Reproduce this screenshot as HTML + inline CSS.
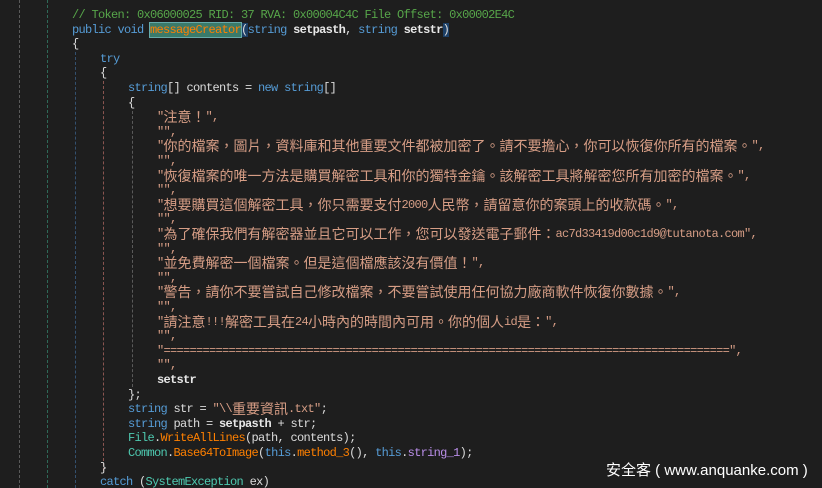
<!DOCTYPE html>
<html><head><meta charset="utf-8"><style>
html,body{margin:0;padding:0;background:#1e1e1e;width:822px;height:488px;overflow:hidden;position:relative}
.g{position:absolute;width:0;border-left:1px dashed}
.code{position:absolute;left:0;top:8px;font-family:"Liberation Mono",monospace;font-size:12px;letter-spacing:-0.7px;color:#dcdcdc}
.l{position:absolute;left:0;height:14.6px;line-height:14.6px;white-space:pre}
.c{font-family:"Noto Sans CJK TC","Noto Sans CJK SC",sans-serif;font-size:14px;letter-spacing:0;line-height:14.6px;display:inline-block;vertical-align:top;height:14.6px}
.kw{color:#569cd6}.cm{color:#57a64a}.st{color:#d69d85}.mt{color:#ff8000}.ty{color:#4ec9b0}.fd{color:#b98ee8}
.b{font-weight:bold;color:#e8e8e8}
.hl{background:#3a7a6a;outline:1px solid #6aa;}
.pb{background:#1c3f66}
.wm{position:absolute;left:606px;top:459px;font-family:"Liberation Sans","Noto Sans CJK SC",sans-serif;font-size:15px;color:#fff;white-space:pre}
</style></head><body>
<div class="g" style="left:19px;top:0;height:488px;border-color:#5a5a5a"></div>
<div class="g" style="left:47px;top:0;height:488px;border-color:#2e6a58"></div>
<div class="g" style="left:75px;top:52px;height:436px;border-color:#34506e"></div>
<div class="g" style="left:103px;top:81px;height:390px;border-color:#8a5550"></div>
<div class="g" style="left:132px;top:111px;height:276px;border-color:#5a5a5a"></div>
<div class="code">
<div class="l" style="top:0;left:72px"><span class="cm">// Token: 0x06000025 RID: 37 RVA: 0x00004C4C File Offset: 0x00002E4C</span></div>
<div class="l" style="top:14.6px;left:72px"><span class="kw">public void </span><span class="mt hl">messageCreator</span><span class="pb">(</span><span class="kw">string</span> <span class="b">setpasth</span>, <span class="kw">string</span> <span class="b">setstr</span><span class="pb">)</span></div>
<div class="l" style="top:29.2px;left:72px">{</div>
<div class="l" style="top:43.8px;left:100px"><span class="kw">try</span></div>
<div class="l" style="top:58.4px;left:100px">{</div>
<div class="l" style="top:73px;left:128px"><span class="kw">string</span>[] contents = <span class="kw">new</span> <span class="kw">string</span>[]</div>
<div class="l" style="top:87.6px;left:128px">{</div>
<div class="l st" style="top:102.2px;left:157px">"<span class="c">注意！</span>",</div>
<div class="l st" style="top:116.8px;left:157px">"",</div>
<div class="l st" style="top:131.4px;left:157px">"<span class="c">你的檔案，圖片，資料庫和其他重要文件都被加密了。請不要擔心，你可以恢復你所有的檔案。</span>",</div>
<div class="l st" style="top:146px;left:157px">"",</div>
<div class="l st" style="top:160.6px;left:157px">"<span class="c">恢復檔案的唯一方法是購買解密工具和你的獨特金鑰。該解密工具將解密您所有加密的檔案。</span>",</div>
<div class="l st" style="top:175.2px;left:157px">"",</div>
<div class="l st" style="top:189.8px;left:157px">"<span class="c">想要購買這個解密工具，你只需要支付</span>2000<span class="c">人民幣，請留意你的案頭上的收款碼。</span>",</div>
<div class="l st" style="top:204.4px;left:157px">"",</div>
<div class="l st" style="top:219px;left:157px">"<span class="c">為了確保我們有解密器並且它可以工作，您可以發送電子郵件：</span>ac7d33419d00c1d9@tutanota.com",</div>
<div class="l st" style="top:233.6px;left:157px">"",</div>
<div class="l st" style="top:248.2px;left:157px">"<span class="c">並免費解密一個檔案。但是這個檔應該沒有價值！</span>",</div>
<div class="l st" style="top:262.8px;left:157px">"",</div>
<div class="l st" style="top:277.4px;left:157px">"<span class="c">警告，請你不要嘗試自己修改檔案，不要嘗試使用任何協力廠商軟件恢復你數據。</span>",</div>
<div class="l st" style="top:292px;left:157px">"",</div>
<div class="l st" style="top:306.6px;left:157px">"<span class="c">請注意</span>!!!<span class="c">解密工具在</span>24<span class="c">小時內的時間內可用。你的個人</span>id<span class="c">是：</span>",</div>
<div class="l st" style="top:321.2px;left:157px">"",</div>
<div class="l st" style="top:335.8px;left:157px">"=======================================================================================",</div>
<div class="l st" style="top:350.4px;left:157px">"",</div>
<div class="l" style="top:365px;left:157px"><span class="b">setstr</span></div>
<div class="l" style="top:379.6px;left:128px">};</div>
<div class="l" style="top:394.2px;left:128px"><span class="kw">string</span> str = <span class="st">"\\<span class="c">重要資訊</span>.txt"</span>;</div>
<div class="l" style="top:408.8px;left:128px"><span class="kw">string</span> path = <span class="b">setpasth</span> + str;</div>
<div class="l" style="top:423.4px;left:128px"><span class="ty">File</span>.<span class="mt">WriteAllLines</span>(path, contents);</div>
<div class="l" style="top:438px;left:128px"><span class="ty">Common</span>.<span class="mt">Base64ToImage</span>(<span class="kw">this</span>.<span class="mt">method_3</span>(), <span class="kw">this</span>.<span class="fd">string_1</span>);</div>
<div class="l" style="top:452.6px;left:100px">}</div>
<div class="l" style="top:467.2px;left:100px"><span class="kw">catch</span> (<span class="ty">SystemException</span> ex)</div>
</div>
<div class="wm">安全客 ( www.anquanke.com )</div>
</body></html>
